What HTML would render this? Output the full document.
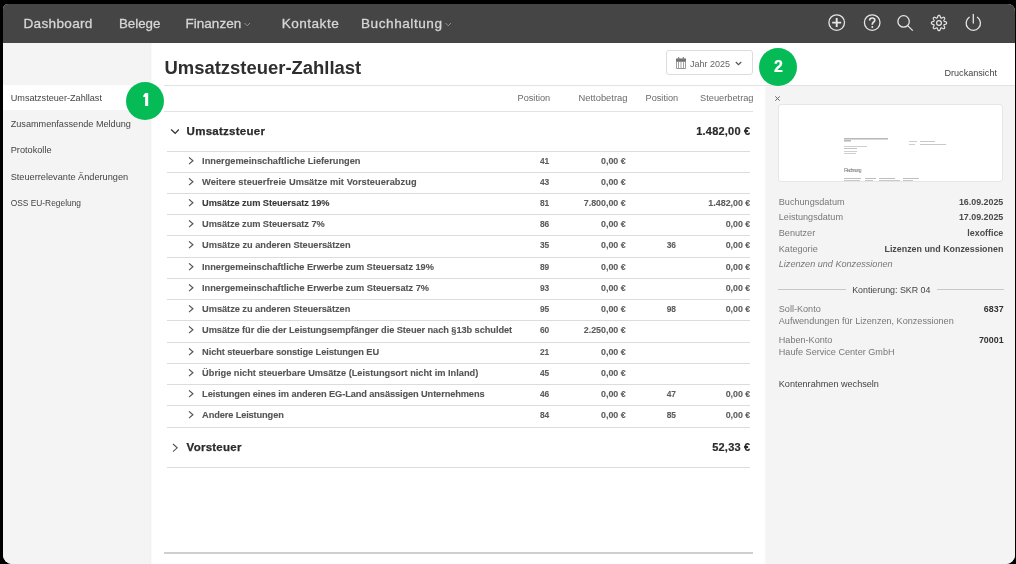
<!DOCTYPE html>
<html><head><meta charset="utf-8"><style>
html,body{margin:0;padding:0;}
body{width:1016px;height:564px;background:#000;overflow:hidden;position:relative;font-family:"Liberation Sans",sans-serif;}
#app{position:absolute;left:3px;top:4px;width:1012px;height:560px;overflow:hidden;background:#fff;border-radius:5px 7px 9px 9px;}
#inner{position:absolute;left:-3px;top:-4px;width:1016px;height:564px;will-change:transform;}
.t{position:absolute;white-space:nowrap;line-height:normal;}
.r{position:absolute;box-sizing:border-box;}
.badge{position:absolute;width:38px;height:38px;border-radius:50%;background:#05bb55;color:#fff;font-weight:bold;font-size:18px;line-height:38px;text-align:center;}
</style></head><body>
<div id="app"><div id="inner">
<div class="r" style="left:0px;top:0px;width:1016px;height:43px;background:#454545;"></div>
<div class="t" style="left:23.5px;top:16.00px;font-size:13.6px;color:#d6d6d6;font-weight:normal;font-style:normal;-webkit-text-stroke:0.3px #d6d6d6;letter-spacing:0.300px;">Dashboard</div>
<div class="t" style="left:119px;top:16.00px;font-size:13.3px;color:#d6d6d6;font-weight:normal;font-style:normal;-webkit-text-stroke:0.3px #d6d6d6;letter-spacing:-0.026px;">Belege</div>
<div class="t" style="left:185.4px;top:16.00px;font-size:13.5px;color:#d6d6d6;font-weight:normal;font-style:normal;-webkit-text-stroke:0.3px #d6d6d6;letter-spacing:0.050px;">Finanzen</div>
<div class="t" style="left:281.7px;top:16.00px;font-size:13.6px;color:#d6d6d6;font-weight:normal;font-style:normal;-webkit-text-stroke:0.3px #d6d6d6;letter-spacing:0.478px;">Kontakte</div>
<div class="t" style="left:361px;top:16.00px;font-size:13.6px;color:#d6d6d6;font-weight:normal;font-style:normal;-webkit-text-stroke:0.3px #d6d6d6;letter-spacing:0.538px;">Buchhaltung</div>
<svg class="r" style="left:243.5px;top:22px" width="7" height="5" viewBox="0 0 7 5"><path d="M0.5 1 L3.25 3.8 L6 1" fill="none" stroke="#9a9a9a" stroke-width="0.9"/></svg>
<svg class="r" style="left:444.6px;top:22px" width="7" height="5" viewBox="0 0 7 5"><path d="M0.5 1 L3.25 3.8 L6 1" fill="none" stroke="#9a9a9a" stroke-width="0.9"/></svg>
<svg class="r" style="left:826px;top:12px" width="22" height="22" viewBox="0 0 22 22">
<circle cx="10.7" cy="10.6" r="7.8" fill="none" stroke="#e6e6e6" stroke-width="1.3"/>
<path d="M6.2 10.6 H15.2 M10.7 6.1 V15.1" stroke="#e6e6e6" stroke-width="1.9"/></svg>
<svg class="r" style="left:861px;top:12px" width="22" height="22" viewBox="0 0 22 22">
<circle cx="11.2" cy="10.6" r="7.8" fill="none" stroke="#e6e6e6" stroke-width="1.3"/>
<path d="M8.6 8.6 C8.6 6.9 9.7 6.0 11.2 6.0 C12.8 6.0 13.8 7.0 13.8 8.3 C13.8 9.9 11.3 10.2 11.3 12.2 V12.8" fill="none" stroke="#e6e6e6" stroke-width="1.7"/>
<circle cx="11.3" cy="15.0" r="1.0" fill="#e6e6e6"/></svg>
<svg class="r" style="left:893px;top:11px" width="24" height="24" viewBox="0 0 24 24">
<circle cx="10.6" cy="10.4" r="5.7" fill="none" stroke="#e6e6e6" stroke-width="1.3"/>
<path d="M14.6 14.6 L19.8 19.6" stroke="#e6e6e6" stroke-width="1.3"/></svg>
<svg class="r" style="left:926.8px;top:11px" width="24" height="24" viewBox="0 0 24 24">
<path d="M19.55 12.00 L19.55 12.20 L19.54 12.40 L19.53 12.59 L19.41 12.78 L19.15 12.94 L18.85 13.09 L18.54 13.21 L18.21 13.32 L17.89 13.42 L17.59 13.50 L17.32 13.58 L17.18 13.68 L17.14 13.82 L17.09 13.95 L17.04 14.09 L16.98 14.22 L16.92 14.35 L16.86 14.47 L16.88 14.65 L17.02 14.90 L17.17 15.17 L17.33 15.46 L17.48 15.77 L17.61 16.08 L17.72 16.39 L17.79 16.69 L17.74 16.90 L17.61 17.05 L17.48 17.20 L17.34 17.34 L17.20 17.48 L17.05 17.61 L16.90 17.74 L16.69 17.79 L16.39 17.72 L16.08 17.61 L15.77 17.48 L15.46 17.33 L15.17 17.17 L14.90 17.02 L14.65 16.88 L14.47 16.86 L14.35 16.92 L14.22 16.98 L14.09 17.04 L13.95 17.09 L13.82 17.14 L13.68 17.18 L13.58 17.32 L13.50 17.59 L13.42 17.89 L13.32 18.21 L13.21 18.54 L13.09 18.85 L12.94 19.15 L12.78 19.41 L12.59 19.53 L12.40 19.54 L12.20 19.55 L12.00 19.55 L11.80 19.55 L11.60 19.54 L11.41 19.53 L11.22 19.41 L11.06 19.15 L10.91 18.85 L10.79 18.54 L10.68 18.21 L10.58 17.89 L10.50 17.59 L10.42 17.32 L10.32 17.18 L10.18 17.14 L10.05 17.09 L9.91 17.04 L9.78 16.98 L9.65 16.92 L9.53 16.86 L9.35 16.88 L9.10 17.02 L8.83 17.17 L8.54 17.33 L8.23 17.48 L7.92 17.61 L7.61 17.72 L7.31 17.79 L7.10 17.74 L6.95 17.61 L6.80 17.48 L6.66 17.34 L6.52 17.20 L6.39 17.05 L6.26 16.90 L6.21 16.69 L6.28 16.39 L6.39 16.08 L6.52 15.77 L6.67 15.46 L6.83 15.17 L6.98 14.90 L7.12 14.65 L7.14 14.47 L7.08 14.35 L7.02 14.22 L6.96 14.09 L6.91 13.95 L6.86 13.82 L6.82 13.68 L6.68 13.58 L6.41 13.50 L6.11 13.42 L5.79 13.32 L5.46 13.21 L5.15 13.09 L4.85 12.94 L4.59 12.78 L4.47 12.59 L4.46 12.40 L4.45 12.20 L4.45 12.00 L4.45 11.80 L4.46 11.60 L4.47 11.41 L4.59 11.22 L4.85 11.06 L5.15 10.91 L5.46 10.79 L5.79 10.68 L6.11 10.58 L6.41 10.50 L6.68 10.42 L6.82 10.32 L6.86 10.18 L6.91 10.05 L6.96 9.91 L7.02 9.78 L7.08 9.65 L7.14 9.53 L7.12 9.35 L6.98 9.10 L6.83 8.83 L6.67 8.54 L6.52 8.23 L6.39 7.92 L6.28 7.61 L6.21 7.31 L6.26 7.10 L6.39 6.95 L6.52 6.80 L6.66 6.66 L6.80 6.52 L6.95 6.39 L7.10 6.26 L7.31 6.21 L7.61 6.28 L7.92 6.39 L8.23 6.52 L8.54 6.67 L8.83 6.83 L9.10 6.98 L9.35 7.12 L9.53 7.14 L9.65 7.08 L9.78 7.02 L9.91 6.96 L10.05 6.91 L10.18 6.86 L10.32 6.82 L10.42 6.68 L10.50 6.41 L10.58 6.11 L10.68 5.79 L10.79 5.46 L10.91 5.15 L11.06 4.85 L11.22 4.59 L11.41 4.47 L11.60 4.46 L11.80 4.45 L12.00 4.45 L12.20 4.45 L12.40 4.46 L12.59 4.47 L12.78 4.59 L12.94 4.85 L13.09 5.15 L13.21 5.46 L13.32 5.79 L13.42 6.11 L13.50 6.41 L13.58 6.68 L13.68 6.82 L13.82 6.86 L13.95 6.91 L14.09 6.96 L14.22 7.02 L14.35 7.08 L14.47 7.14 L14.65 7.12 L14.90 6.98 L15.17 6.83 L15.46 6.67 L15.77 6.52 L16.08 6.39 L16.39 6.28 L16.69 6.21 L16.90 6.26 L17.05 6.39 L17.20 6.52 L17.34 6.66 L17.48 6.80 L17.61 6.95 L17.74 7.10 L17.79 7.31 L17.72 7.61 L17.61 7.92 L17.48 8.23 L17.33 8.54 L17.17 8.83 L17.02 9.10 L16.88 9.35 L16.86 9.53 L16.92 9.65 L16.98 9.78 L17.04 9.91 L17.09 10.05 L17.14 10.18 L17.18 10.32 L17.32 10.42 L17.59 10.50 L17.89 10.58 L18.21 10.68 L18.54 10.79 L18.85 10.91 L19.15 11.06 L19.41 11.22 L19.53 11.41 L19.54 11.60 L19.55 11.80Z" fill="none" stroke="#e6e6e6" stroke-width="1.2" stroke-linejoin="round"/>
<circle cx="12" cy="12" r="2.4" fill="none" stroke="#e6e6e6" stroke-width="1.2"/></svg>
<svg class="r" style="left:961px;top:11px" width="24" height="24" viewBox="0 0 24 24">
<path d="M8.2 6.3 A7.15 7.15 0 1 0 16.4 6.3" fill="none" stroke="#e6e6e6" stroke-width="1.3" stroke-linecap="round"/>
<path d="M12.3 3.4 V12.1" stroke="#e6e6e6" stroke-width="1.3" stroke-linecap="round"/></svg>
<div class="r" style="left:0px;top:43px;width:151px;height:530px;background:#f4f4f4;"></div>
<div class="r" style="left:150px;top:43px;width:1px;height:530px;background:#f2f2f2;"></div>
<div class="r" style="left:151px;top:43px;width:1px;height:530px;background:#fafafa;"></div>
<div class="r" style="left:0px;top:85px;width:151px;height:25px;background:#ffffff;"></div>
<div class="t" style="left:10.7px;top:93.00px;font-size:9.13px;color:#444;font-weight:normal;font-style:normal;">Umsatzsteuer-Zahllast</div>
<div class="t" style="left:10.7px;top:119.00px;font-size:9.13px;color:#444;font-weight:normal;font-style:normal;">Zusammenfassende Meldung</div>
<div class="t" style="left:10.7px;top:145.00px;font-size:9.2px;color:#444;font-weight:normal;font-style:normal;">Protokolle</div>
<div class="t" style="left:10.7px;top:172.00px;font-size:9.2px;color:#444;font-weight:normal;font-style:normal;">Steuerrelevante Änderungen</div>
<div class="t" style="left:10.7px;top:198.00px;font-size:8.4px;color:#444;font-weight:normal;font-style:normal;">OSS EU-Regelung</div>
<div class="t" style="left:164.5px;top:57.00px;font-size:18.45px;color:#2e2e2e;font-weight:bold;font-style:normal;">Umsatzsteuer-Zahllast</div>
<div class="r" style="left:164px;top:85px;width:852px;height:1px;background:#e3e3e3;"></div>
<div class="r" style="left:164px;top:111px;width:589px;height:1px;background:#e3e3e3;"></div>
<div class="t" style="right:465.79999999999995px;top:93.00px;font-size:9.2px;color:#6a6a6a;font-weight:normal;font-style:normal;">Position</div>
<div class="t" style="right:388.5px;top:92.00px;font-size:9.4px;color:#6a6a6a;font-weight:normal;font-style:normal;">Nettobetrag</div>
<div class="t" style="right:337.79999999999995px;top:93.00px;font-size:9.2px;color:#6a6a6a;font-weight:normal;font-style:normal;">Position</div>
<div class="t" style="right:262.5px;top:93.00px;font-size:9.25px;color:#6a6a6a;font-weight:normal;font-style:normal;">Steuerbetrag</div>
<div class="r" style="left:666px;top:50px;width:87px;height:25px;border:1px solid #dcdcdc;border-radius:3px;background:#fff"></div>
<svg class="r" style="left:676px;top:57px" width="10" height="12" viewBox="0 0 10 12">
<path d="M0 1.5 H10 V4.8 H0 Z" fill="#707070"/>
<path d="M2.6 0.2 V2.5 M7.4 0.2 V2.5" stroke="#6a6a6a" stroke-width="1.3"/>
<path d="M2.6 1.5 V2.6 M7.4 1.5 V2.6" stroke="#ccc" stroke-width="0.5"/>
<path d="M0.45 4.8 V11.5 H9.55 V4.8" fill="none" stroke="#8a8a8a" stroke-width="0.9"/>
<path d="M2.5 4.8 V11.2 M5 4.8 V11.2 M7.5 4.8 V11.2" stroke="#8a8a8a" stroke-width="0.8"/></svg>
<div class="t" style="left:690px;top:59.00px;font-size:9.0px;color:#666;font-weight:normal;font-style:normal;">Jahr 2025</div>
<svg class="r" style="left:735px;top:61px" width="7" height="5" viewBox="0 0 7 5"><path d="M0.8 1 L3.5 3.7 L6.2 1" fill="none" stroke="#555" stroke-width="1.2"/></svg>
<div class="t" style="right:19px;top:68.00px;font-size:9.1px;color:#444;font-weight:normal;font-style:normal;">Druckansicht</div>
<div class="badge" style="left:126px;top:82px"></div>
<svg class="r" style="left:0;top:0" width="300" height="200" viewBox="0 0 300 200"><path d="M145.2 93 H148.2 V106 H145.1 V96.9 L143.3 97.1 V95.4 Z" fill="#fff"/></svg>
<div class="badge" style="left:759.4px;top:48px;font-size:16px;line-height:37px;-webkit-text-stroke:0.2px #fff">2</div>
<svg class="r" style="left:170px;top:127.5px" width="10" height="7" viewBox="0 0 10 7"><path d="M1.1 1.5 L5.2 5.3 L8.8 1.5" fill="none" stroke="#333" stroke-width="1.2"/></svg>
<div class="t" style="left:186.6px;top:125.00px;font-size:11.5px;color:#2a2a2a;font-weight:bold;font-style:normal;-webkit-text-stroke:0.25px #2a2a2a;letter-spacing:0.260px;">Umsatzsteuer</div>
<div class="t" style="right:265.57499999999993px;top:125.00px;font-size:11.0px;color:#2a2a2a;font-weight:bold;font-style:normal;-webkit-text-stroke:0.2px #2a2a2a;letter-spacing:0.225px;">1.482,00 €</div>
<div class="r" style="left:167px;top:151px;width:583px;height:1px;background:#dcdcdc;"></div>
<svg class="r" style="left:188px;top:157.20px" width="7" height="9" viewBox="0 0 7 9"><path d="M1 0.4 L4.9 3.7 L1 7.1" fill="none" stroke="#555" stroke-width="1.2"/></svg>
<div class="t" style="left:202.1px;top:156.00px;font-size:9.25px;color:#555;font-weight:bold;font-style:normal;-webkit-text-stroke:0.1px currentColor;letter-spacing:-0.013px;">Innergemeinschaftliche Lieferungen</div>
<div class="t" style="right:466.79999999999995px;top:156.00px;font-size:8.4px;color:#5c5c5c;font-weight:bold;font-style:normal;-webkit-text-stroke:0.1px currentColor;">41</div>
<div class="t" style="right:390.29999999999995px;top:156.00px;font-size:8.9px;color:#5c5c5c;font-weight:bold;font-style:normal;-webkit-text-stroke:0.1px currentColor;">0,00 €</div>
<div class="r" style="left:167px;top:172px;width:583px;height:1px;background:#dcdcdc;"></div>
<svg class="r" style="left:188px;top:178.20px" width="7" height="9" viewBox="0 0 7 9"><path d="M1 0.4 L4.9 3.7 L1 7.1" fill="none" stroke="#555" stroke-width="1.2"/></svg>
<div class="t" style="left:202.1px;top:177.00px;font-size:9.25px;color:#555;font-weight:bold;font-style:normal;-webkit-text-stroke:0.1px currentColor;letter-spacing:0.056px;">Weitere steuerfreie Umsätze mit Vorsteuerabzug</div>
<div class="t" style="right:466.79999999999995px;top:177.00px;font-size:8.4px;color:#5c5c5c;font-weight:bold;font-style:normal;-webkit-text-stroke:0.1px currentColor;">43</div>
<div class="t" style="right:390.29999999999995px;top:177.00px;font-size:8.9px;color:#5c5c5c;font-weight:bold;font-style:normal;-webkit-text-stroke:0.1px currentColor;">0,00 €</div>
<div class="r" style="left:167px;top:193px;width:583px;height:1px;background:#dcdcdc;"></div>
<svg class="r" style="left:188px;top:199.20px" width="7" height="9" viewBox="0 0 7 9"><path d="M1 0.4 L4.9 3.7 L1 7.1" fill="none" stroke="#555" stroke-width="1.2"/></svg>
<div class="t" style="left:202.1px;top:198.00px;font-size:9.25px;color:#3a3a3a;font-weight:bold;font-style:normal;-webkit-text-stroke:0.1px currentColor;letter-spacing:-0.082px;">Umsätze zum Steuersatz 19%</div>
<div class="t" style="right:466.79999999999995px;top:198.00px;font-size:8.4px;color:#5c5c5c;font-weight:bold;font-style:normal;-webkit-text-stroke:0.1px currentColor;">81</div>
<div class="t" style="right:390.29999999999995px;top:198.00px;font-size:8.9px;color:#5c5c5c;font-weight:bold;font-style:normal;-webkit-text-stroke:0.1px currentColor;">7.800,00 €</div>
<div class="t" style="right:265.70000000000005px;top:198.00px;font-size:8.9px;color:#5c5c5c;font-weight:bold;font-style:normal;-webkit-text-stroke:0.1px currentColor;">1.482,00 €</div>
<div class="r" style="left:167px;top:214px;width:583px;height:1px;background:#dcdcdc;"></div>
<svg class="r" style="left:188px;top:220.20px" width="7" height="9" viewBox="0 0 7 9"><path d="M1 0.4 L4.9 3.7 L1 7.1" fill="none" stroke="#555" stroke-width="1.2"/></svg>
<div class="t" style="left:202.1px;top:219.00px;font-size:9.25px;color:#555;font-weight:bold;font-style:normal;-webkit-text-stroke:0.1px currentColor;letter-spacing:-0.076px;">Umsätze zum Steuersatz 7%</div>
<div class="t" style="right:466.79999999999995px;top:219.00px;font-size:8.4px;color:#5c5c5c;font-weight:bold;font-style:normal;-webkit-text-stroke:0.1px currentColor;">86</div>
<div class="t" style="right:390.29999999999995px;top:219.00px;font-size:8.9px;color:#5c5c5c;font-weight:bold;font-style:normal;-webkit-text-stroke:0.1px currentColor;">0,00 €</div>
<div class="t" style="right:265.70000000000005px;top:219.00px;font-size:8.9px;color:#5c5c5c;font-weight:bold;font-style:normal;-webkit-text-stroke:0.1px currentColor;">0,00 €</div>
<div class="r" style="left:167px;top:235px;width:583px;height:1px;background:#dcdcdc;"></div>
<svg class="r" style="left:188px;top:241.20px" width="7" height="9" viewBox="0 0 7 9"><path d="M1 0.4 L4.9 3.7 L1 7.1" fill="none" stroke="#555" stroke-width="1.2"/></svg>
<div class="t" style="left:202.1px;top:240.00px;font-size:9.25px;color:#555;font-weight:bold;font-style:normal;-webkit-text-stroke:0.1px currentColor;letter-spacing:-0.036px;">Umsätze zu anderen Steuersätzen</div>
<div class="t" style="right:466.79999999999995px;top:240.00px;font-size:8.4px;color:#5c5c5c;font-weight:bold;font-style:normal;-webkit-text-stroke:0.1px currentColor;">35</div>
<div class="t" style="right:390.29999999999995px;top:240.00px;font-size:8.9px;color:#5c5c5c;font-weight:bold;font-style:normal;-webkit-text-stroke:0.1px currentColor;">0,00 €</div>
<div class="t" style="right:340px;top:240.00px;font-size:8.4px;color:#5c5c5c;font-weight:bold;font-style:normal;-webkit-text-stroke:0.1px currentColor;">36</div>
<div class="t" style="right:265.70000000000005px;top:240.00px;font-size:8.9px;color:#5c5c5c;font-weight:bold;font-style:normal;-webkit-text-stroke:0.1px currentColor;">0,00 €</div>
<div class="r" style="left:167px;top:257px;width:583px;height:1px;background:#dcdcdc;"></div>
<svg class="r" style="left:188px;top:263.20px" width="7" height="9" viewBox="0 0 7 9"><path d="M1 0.4 L4.9 3.7 L1 7.1" fill="none" stroke="#555" stroke-width="1.2"/></svg>
<div class="t" style="left:202.1px;top:262.00px;font-size:9.25px;color:#555;font-weight:bold;font-style:normal;-webkit-text-stroke:0.1px currentColor;letter-spacing:-0.043px;">Innergemeinschaftliche Erwerbe zum Steuersatz 19%</div>
<div class="t" style="right:466.79999999999995px;top:262.00px;font-size:8.4px;color:#5c5c5c;font-weight:bold;font-style:normal;-webkit-text-stroke:0.1px currentColor;">89</div>
<div class="t" style="right:390.29999999999995px;top:262.00px;font-size:8.9px;color:#5c5c5c;font-weight:bold;font-style:normal;-webkit-text-stroke:0.1px currentColor;">0,00 €</div>
<div class="t" style="right:265.70000000000005px;top:262.00px;font-size:8.9px;color:#5c5c5c;font-weight:bold;font-style:normal;-webkit-text-stroke:0.1px currentColor;">0,00 €</div>
<div class="r" style="left:167px;top:278px;width:583px;height:1px;background:#dcdcdc;"></div>
<svg class="r" style="left:188px;top:284.20px" width="7" height="9" viewBox="0 0 7 9"><path d="M1 0.4 L4.9 3.7 L1 7.1" fill="none" stroke="#555" stroke-width="1.2"/></svg>
<div class="t" style="left:202.1px;top:283.00px;font-size:9.25px;color:#555;font-weight:bold;font-style:normal;-webkit-text-stroke:0.1px currentColor;letter-spacing:-0.039px;">Innergemeinschaftliche Erwerbe zum Steuersatz 7%</div>
<div class="t" style="right:466.79999999999995px;top:283.00px;font-size:8.4px;color:#5c5c5c;font-weight:bold;font-style:normal;-webkit-text-stroke:0.1px currentColor;">93</div>
<div class="t" style="right:390.29999999999995px;top:283.00px;font-size:8.9px;color:#5c5c5c;font-weight:bold;font-style:normal;-webkit-text-stroke:0.1px currentColor;">0,00 €</div>
<div class="t" style="right:265.70000000000005px;top:283.00px;font-size:8.9px;color:#5c5c5c;font-weight:bold;font-style:normal;-webkit-text-stroke:0.1px currentColor;">0,00 €</div>
<div class="r" style="left:167px;top:299px;width:583px;height:1px;background:#dcdcdc;"></div>
<svg class="r" style="left:188px;top:305.20px" width="7" height="9" viewBox="0 0 7 9"><path d="M1 0.4 L4.9 3.7 L1 7.1" fill="none" stroke="#555" stroke-width="1.2"/></svg>
<div class="t" style="left:202.1px;top:304.00px;font-size:9.25px;color:#555;font-weight:bold;font-style:normal;-webkit-text-stroke:0.1px currentColor;letter-spacing:-0.046px;">Umsätze zu anderen Steuersätzen</div>
<div class="t" style="right:466.79999999999995px;top:304.00px;font-size:8.4px;color:#5c5c5c;font-weight:bold;font-style:normal;-webkit-text-stroke:0.1px currentColor;">95</div>
<div class="t" style="right:390.29999999999995px;top:304.00px;font-size:8.9px;color:#5c5c5c;font-weight:bold;font-style:normal;-webkit-text-stroke:0.1px currentColor;">0,00 €</div>
<div class="t" style="right:340px;top:304.00px;font-size:8.4px;color:#5c5c5c;font-weight:bold;font-style:normal;-webkit-text-stroke:0.1px currentColor;">98</div>
<div class="t" style="right:265.70000000000005px;top:304.00px;font-size:8.9px;color:#5c5c5c;font-weight:bold;font-style:normal;-webkit-text-stroke:0.1px currentColor;">0,00 €</div>
<div class="r" style="left:167px;top:320px;width:583px;height:1px;background:#dcdcdc;"></div>
<svg class="r" style="left:188px;top:326.20px" width="7" height="9" viewBox="0 0 7 9"><path d="M1 0.4 L4.9 3.7 L1 7.1" fill="none" stroke="#555" stroke-width="1.2"/></svg>
<div class="t" style="left:202.1px;top:325.00px;font-size:9.25px;color:#555;font-weight:bold;font-style:normal;-webkit-text-stroke:0.1px currentColor;letter-spacing:-0.076px;">Umsätze für die der Leistungsempfänger die Steuer nach §13b schuldet</div>
<div class="t" style="right:466.79999999999995px;top:325.00px;font-size:8.4px;color:#5c5c5c;font-weight:bold;font-style:normal;-webkit-text-stroke:0.1px currentColor;">60</div>
<div class="t" style="right:390.29999999999995px;top:325.00px;font-size:8.9px;color:#5c5c5c;font-weight:bold;font-style:normal;-webkit-text-stroke:0.1px currentColor;">2.250,00 €</div>
<div class="r" style="left:167px;top:342px;width:583px;height:1px;background:#dcdcdc;"></div>
<svg class="r" style="left:188px;top:348.20px" width="7" height="9" viewBox="0 0 7 9"><path d="M1 0.4 L4.9 3.7 L1 7.1" fill="none" stroke="#555" stroke-width="1.2"/></svg>
<div class="t" style="left:202.1px;top:347.00px;font-size:9.25px;color:#555;font-weight:bold;font-style:normal;-webkit-text-stroke:0.1px currentColor;letter-spacing:-0.103px;">Nicht steuerbare sonstige Leistungen EU</div>
<div class="t" style="right:466.79999999999995px;top:347.00px;font-size:8.4px;color:#5c5c5c;font-weight:bold;font-style:normal;-webkit-text-stroke:0.1px currentColor;">21</div>
<div class="t" style="right:390.29999999999995px;top:347.00px;font-size:8.9px;color:#5c5c5c;font-weight:bold;font-style:normal;-webkit-text-stroke:0.1px currentColor;">0,00 €</div>
<div class="r" style="left:167px;top:363px;width:583px;height:1px;background:#dcdcdc;"></div>
<svg class="r" style="left:188px;top:369.20px" width="7" height="9" viewBox="0 0 7 9"><path d="M1 0.4 L4.9 3.7 L1 7.1" fill="none" stroke="#555" stroke-width="1.2"/></svg>
<div class="t" style="left:202.1px;top:368.00px;font-size:9.25px;color:#555;font-weight:bold;font-style:normal;-webkit-text-stroke:0.1px currentColor;letter-spacing:-0.014px;">Übrige nicht steuerbare Umsätze (Leistungsort nicht im Inland)</div>
<div class="t" style="right:466.79999999999995px;top:368.00px;font-size:8.4px;color:#5c5c5c;font-weight:bold;font-style:normal;-webkit-text-stroke:0.1px currentColor;">45</div>
<div class="t" style="right:390.29999999999995px;top:368.00px;font-size:8.9px;color:#5c5c5c;font-weight:bold;font-style:normal;-webkit-text-stroke:0.1px currentColor;">0,00 €</div>
<div class="r" style="left:167px;top:384px;width:583px;height:1px;background:#dcdcdc;"></div>
<svg class="r" style="left:188px;top:390.20px" width="7" height="9" viewBox="0 0 7 9"><path d="M1 0.4 L4.9 3.7 L1 7.1" fill="none" stroke="#555" stroke-width="1.2"/></svg>
<div class="t" style="left:202.1px;top:389.00px;font-size:9.25px;color:#555;font-weight:bold;font-style:normal;-webkit-text-stroke:0.1px currentColor;letter-spacing:-0.110px;">Leistungen eines im anderen EG-Land ansässigen Unternehmens</div>
<div class="t" style="right:466.79999999999995px;top:389.00px;font-size:8.4px;color:#5c5c5c;font-weight:bold;font-style:normal;-webkit-text-stroke:0.1px currentColor;">46</div>
<div class="t" style="right:390.29999999999995px;top:389.00px;font-size:8.9px;color:#5c5c5c;font-weight:bold;font-style:normal;-webkit-text-stroke:0.1px currentColor;">0,00 €</div>
<div class="t" style="right:340px;top:389.00px;font-size:8.4px;color:#5c5c5c;font-weight:bold;font-style:normal;-webkit-text-stroke:0.1px currentColor;">47</div>
<div class="t" style="right:265.70000000000005px;top:389.00px;font-size:8.9px;color:#5c5c5c;font-weight:bold;font-style:normal;-webkit-text-stroke:0.1px currentColor;">0,00 €</div>
<div class="r" style="left:167px;top:405px;width:583px;height:1px;background:#dcdcdc;"></div>
<svg class="r" style="left:188px;top:411.20px" width="7" height="9" viewBox="0 0 7 9"><path d="M1 0.4 L4.9 3.7 L1 7.1" fill="none" stroke="#555" stroke-width="1.2"/></svg>
<div class="t" style="left:202.1px;top:410.00px;font-size:9.25px;color:#555;font-weight:bold;font-style:normal;-webkit-text-stroke:0.1px currentColor;letter-spacing:-0.129px;">Andere Leistungen</div>
<div class="t" style="right:466.79999999999995px;top:410.00px;font-size:8.4px;color:#5c5c5c;font-weight:bold;font-style:normal;-webkit-text-stroke:0.1px currentColor;">84</div>
<div class="t" style="right:390.29999999999995px;top:410.00px;font-size:8.9px;color:#5c5c5c;font-weight:bold;font-style:normal;-webkit-text-stroke:0.1px currentColor;">0,00 €</div>
<div class="t" style="right:340px;top:410.00px;font-size:8.4px;color:#5c5c5c;font-weight:bold;font-style:normal;-webkit-text-stroke:0.1px currentColor;">85</div>
<div class="t" style="right:265.70000000000005px;top:410.00px;font-size:8.9px;color:#5c5c5c;font-weight:bold;font-style:normal;-webkit-text-stroke:0.1px currentColor;">0,00 €</div>
<div class="r" style="left:167px;top:427px;width:583px;height:1px;background:#dcdcdc;"></div>
<svg class="r" style="left:172px;top:443px" width="7" height="10" viewBox="0 0 7 10"><path d="M1 1 L5.2 4.8 L1 8.6" fill="none" stroke="#555" stroke-width="1.1"/></svg>
<div class="t" style="left:186.6px;top:441.00px;font-size:11.5px;color:#2a2a2a;font-weight:bold;font-style:normal;-webkit-text-stroke:0.25px #2a2a2a;letter-spacing:0.245px;">Vorsteuer</div>
<div class="t" style="right:265.5808333333333px;top:441.00px;font-size:11.0px;color:#2a2a2a;font-weight:bold;font-style:normal;-webkit-text-stroke:0.2px #2a2a2a;letter-spacing:0.219px;">52,33 €</div>
<div class="r" style="left:167px;top:467px;width:583px;height:1px;background:#dcdcdc;"></div>
<div class="r" style="left:164px;top:552px;width:589px;height:2px;background:#cfcfcf;"></div>
<div class="r" style="left:766px;top:86px;width:250px;height:480px;background:#f4f4f4;"></div>
<div class="r" style="left:764px;top:86px;width:1px;height:480px;background:#fcfcfc;"></div>
<div class="r" style="left:765px;top:86px;width:1px;height:480px;background:#f8f8f8;"></div>
<svg class="r" style="left:770px;top:90px" width="16" height="16" viewBox="770 90 16 16"><path d="M775.3 96.4 L779.7 100.7 M779.7 96.4 L775.3 100.7" stroke="#666" stroke-width="1.0"/></svg>
<div class="r" style="left:778px;top:104px;width:225px;height:78px;border:1px solid #e6e6e6;border-radius:3px;background:#fff"></div>
<div class="r" style="left:844px;top:138px;width:43.6px;height:1.0px;background:#b8b8b8;"></div>
<div class="r" style="left:844px;top:139px;width:43.6px;height:1.0px;background:#d8d8d8;"></div>
<div class="r" style="left:844px;top:140px;width:7px;height:1.0px;background:#b8b8b8;"></div>
<div class="r" style="left:844px;top:141px;width:7px;height:1.0px;background:#d8d8d8;"></div>
<div class="r" style="left:844px;top:146px;width:22.7px;height:1.0px;background:#cfcfcf;"></div>
<div class="r" style="left:844px;top:148px;width:12.7px;height:1.0px;background:#c4c4c4;"></div>
<div class="r" style="left:844px;top:151px;width:12.7px;height:1.0px;background:#cfcfcf;"></div>
<div class="r" style="left:844px;top:153px;width:11.5px;height:1.0px;background:#cfcfcf;"></div>
<div class="r" style="left:909.1px;top:141px;width:7.7px;height:1.0px;background:#cfcfcf;"></div>
<div class="r" style="left:920.1px;top:141px;width:15px;height:1.0px;background:#c8c8c8;"></div>
<div class="r" style="left:909.1px;top:144px;width:6.4px;height:1.0px;background:#cfcfcf;"></div>
<div class="r" style="left:920.1px;top:144px;width:25.5px;height:1.0px;background:#c8c8c8;"></div>
<div class="r" style="left:844px;top:178px;width:16.6px;height:1.0px;background:#bdbdbd;"></div>
<div class="r" style="left:864.5px;top:178px;width:11.5px;height:1.0px;background:#bdbdbd;"></div>
<div class="r" style="left:878.8px;top:178px;width:16.5px;height:1.0px;background:#bdbdbd;"></div>
<div class="r" style="left:903px;top:178px;width:16px;height:1.0px;background:#bdbdbd;"></div>
<div class="r" style="left:844px;top:180px;width:16px;height:1.0px;background:#c8c8c8;"></div>
<div class="r" style="left:864.5px;top:180px;width:8.5px;height:1.0px;background:#c8c8c8;"></div>
<div class="r" style="left:878.8px;top:180px;width:21px;height:1.0px;background:#c8c8c8;"></div>
<div class="r" style="left:903px;top:180px;width:10px;height:1.0px;background:#c8c8c8;"></div>
<div class="t" style="left:844px;top:167.00px;font-size:5.6px;color:#777;font-weight:normal;font-style:normal;letter-spacing:-1.134px;">Rechnung</div>
<div class="t" style="left:778.8px;top:197.00px;font-size:9.1px;color:#787878;font-weight:normal;font-style:normal;">Buchungsdatum</div>
<div class="t" style="right:12.700000000000045px;top:197.00px;font-size:8.9px;color:#4a4a4a;font-weight:bold;font-style:normal;">16.09.2025</div>
<div class="t" style="left:778.8px;top:212.00px;font-size:9.1px;color:#787878;font-weight:normal;font-style:normal;">Leistungsdatum</div>
<div class="t" style="right:12.700000000000045px;top:212.00px;font-size:8.9px;color:#4a4a4a;font-weight:bold;font-style:normal;">17.09.2025</div>
<div class="t" style="left:778.8px;top:228.00px;font-size:9.1px;color:#787878;font-weight:normal;font-style:normal;">Benutzer</div>
<div class="t" style="right:12.700000000000045px;top:228.00px;font-size:8.9px;color:#4a4a4a;font-weight:bold;font-style:normal;">lexoffice</div>
<div class="t" style="left:778.8px;top:244.00px;font-size:9.1px;color:#787878;font-weight:normal;font-style:normal;">Kategorie</div>
<div class="t" style="right:12.700000000000045px;top:244.00px;font-size:8.9px;color:#4a4a4a;font-weight:bold;font-style:normal;">Lizenzen und Konzessionen</div>
<div class="t" style="left:778.8px;top:259.00px;font-size:9.1px;color:#787878;font-weight:normal;font-style:italic;">Lizenzen und Konzessionen</div>
<div class="r" style="left:778.3px;top:289px;width:67.3px;height:1px;background:#c8c8c8;"></div>
<div class="r" style="left:936.5px;top:289px;width:67.4px;height:1px;background:#c8c8c8;"></div>
<div class="t" style="left:852.2px;top:285.00px;font-size:8.85px;color:#444;font-weight:normal;font-style:normal;">Kontierung: SKR 04</div>
<div class="t" style="left:778.8px;top:304.00px;font-size:9.1px;color:#787878;font-weight:normal;font-style:normal;">Soll-Konto</div>
<div class="t" style="right:12.399999999999977px;top:304.00px;font-size:8.9px;color:#333;font-weight:bold;font-style:normal;">6837</div>
<div class="t" style="left:778.8px;top:316.00px;font-size:9.1px;color:#787878;font-weight:normal;font-style:normal;">Aufwendungen für Lizenzen, Konzessionen</div>
<div class="t" style="left:778.8px;top:335.00px;font-size:9.1px;color:#787878;font-weight:normal;font-style:normal;">Haben-Konto</div>
<div class="t" style="right:12.399999999999977px;top:335.00px;font-size:8.9px;color:#333;font-weight:bold;font-style:normal;">70001</div>
<div class="t" style="left:778.8px;top:347.00px;font-size:9.1px;color:#787878;font-weight:normal;font-style:normal;">Haufe Service Center GmbH</div>
<div class="t" style="left:778.8px;top:379.00px;font-size:9.1px;color:#444;font-weight:normal;font-style:normal;">Kontenrahmen wechseln</div>
</div></div>
</body></html>
